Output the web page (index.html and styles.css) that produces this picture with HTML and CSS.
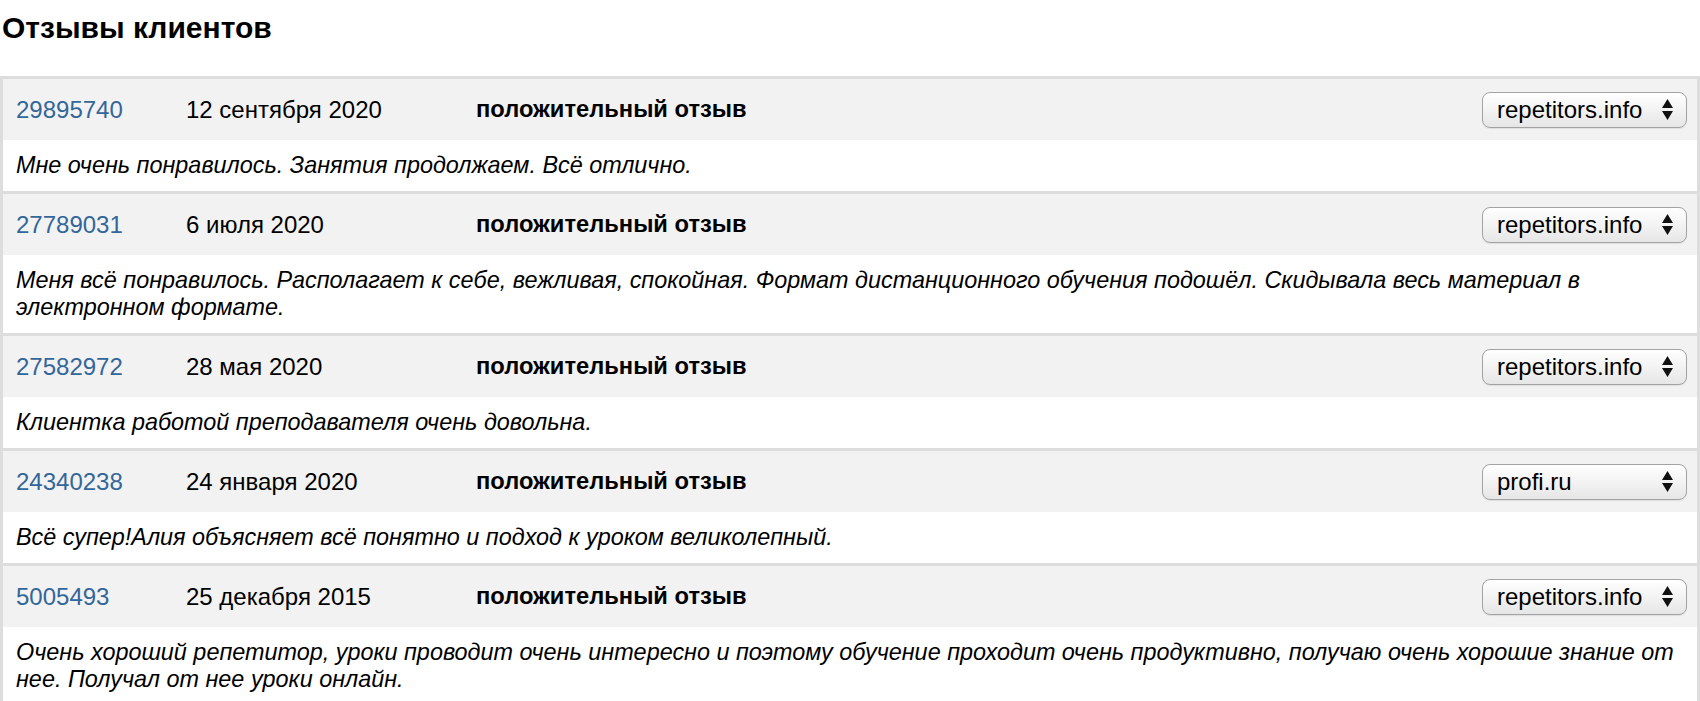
FILE: index.html
```html
<!DOCTYPE html>
<html lang="ru">
<head>
<meta charset="utf-8">
<title>Отзывы клиентов</title>
<link rel="stylesheet" href="styles.css">
</head>
<body>
<h2 class="title">Отзывы клиентов</h2>
<div class="reviews">
  <div class="review">
    <div class="review-head">
      <a class="review-id" href="#">29895740</a>
      <span class="review-date">12 сентября 2020</span>
      <span class="review-type">положительный отзыв</span>
      <div class="source"><span class="source-label">repetitors.info</span><svg class="source-arrows" width="11" height="21" viewBox="0 0 11 21"><path d="M5.5 0 L11 9 L0 9 Z M0 12 L11 12 L5.5 21 Z" fill="#111"/></svg></div>
    </div>
    <div class="review-text">Мне очень понравилось. Занятия продолжаем. Всё отлично.</div>
  </div>
  <div class="review">
    <div class="review-head">
      <a class="review-id" href="#">27789031</a>
      <span class="review-date">6 июля 2020</span>
      <span class="review-type">положительный отзыв</span>
      <div class="source"><span class="source-label">repetitors.info</span><svg class="source-arrows" width="11" height="21" viewBox="0 0 11 21"><path d="M5.5 0 L11 9 L0 9 Z M0 12 L11 12 L5.5 21 Z" fill="#111"/></svg></div>
    </div>
    <div class="review-text">Меня всё понравилось. Располагает к себе, вежливая, спокойная. Формат дистанционного обучения подошёл. Скидывала весь материал в электронном формате.</div>
  </div>
  <div class="review">
    <div class="review-head">
      <a class="review-id" href="#">27582972</a>
      <span class="review-date">28 мая 2020</span>
      <span class="review-type">положительный отзыв</span>
      <div class="source"><span class="source-label">repetitors.info</span><svg class="source-arrows" width="11" height="21" viewBox="0 0 11 21"><path d="M5.5 0 L11 9 L0 9 Z M0 12 L11 12 L5.5 21 Z" fill="#111"/></svg></div>
    </div>
    <div class="review-text">Клиентка работой преподавателя очень довольна.</div>
  </div>
  <div class="review">
    <div class="review-head">
      <a class="review-id" href="#">24340238</a>
      <span class="review-date">24 января 2020</span>
      <span class="review-type">положительный отзыв</span>
      <div class="source"><span class="source-label">profi.ru</span><svg class="source-arrows" width="11" height="21" viewBox="0 0 11 21"><path d="M5.5 0 L11 9 L0 9 Z M0 12 L11 12 L5.5 21 Z" fill="#111"/></svg></div>
    </div>
    <div class="review-text">Всё супер!Алия объясняет всё понятно и подход к уроком великолепный.</div>
  </div>
  <div class="review">
    <div class="review-head">
      <a class="review-id" href="#">5005493</a>
      <span class="review-date">25 декабря 2015</span>
      <span class="review-type">положительный отзыв</span>
      <div class="source"><span class="source-label">repetitors.info</span><svg class="source-arrows" width="11" height="21" viewBox="0 0 11 21"><path d="M5.5 0 L11 9 L0 9 Z M0 12 L11 12 L5.5 21 Z" fill="#111"/></svg></div>
    </div>
    <div class="review-text">Очень хороший репетитор, уроки проводит очень интересно и поэтому обучение проходит очень продуктивно, получаю очень хорошие знание от нее. Получал от нее уроки онлайн.</div>
  </div>
</div>
</body>
</html>
```

FILE: styles.css
```css
body {
  margin: 0;
  font-family: "Liberation Sans", Arial, Helvetica, sans-serif;
  color: #000;
  background: #fff;
}

.title {
  margin: 0 0 32px;
  padding: 11px 0 0 2px;
  font-size: 30px;
  line-height: 33px;
  font-weight: bold;
}

.reviews {
  border: 3px solid #dddddd;
  border-bottom: 0;
}

.review + .review {
  border-top: 3px solid #dddddd;
}

.review-head {
  display: grid;
  grid-template-columns: 170px 290px 1fr 205px;
  align-items: center;
  height: 61px;
  padding: 0 10px 0 13px;
  background: #f2f2f2;
  font-size: 24px;
}

.review-id {
  color: #336699;
  text-decoration: none;
}

.review-type {
  font-weight: bold;
  font-size: 23.7px;
}

.source {
  display: flex;
  align-items: center;
  justify-content: space-between;
  box-sizing: border-box;
  height: 36px;
  padding: 0 13px 0 14px;
  border: 1px solid #a3a3a3;
  border-radius: 8px;
  background: linear-gradient(#ffffff, #f4f4f4 45%, #e6e6e6);
  box-shadow: inset 0 1px 0 #fff, 0 1px 1px rgba(0, 0, 0, 0.08);
  font-size: 24px;
  line-height: 1;
}

.source-arrows {
  display: block;
}

.review-text {
  padding: 12px 13px;
  background: #fff;
  font-size: 23.4px;
  line-height: 27px;
  font-style: italic;
}
```
